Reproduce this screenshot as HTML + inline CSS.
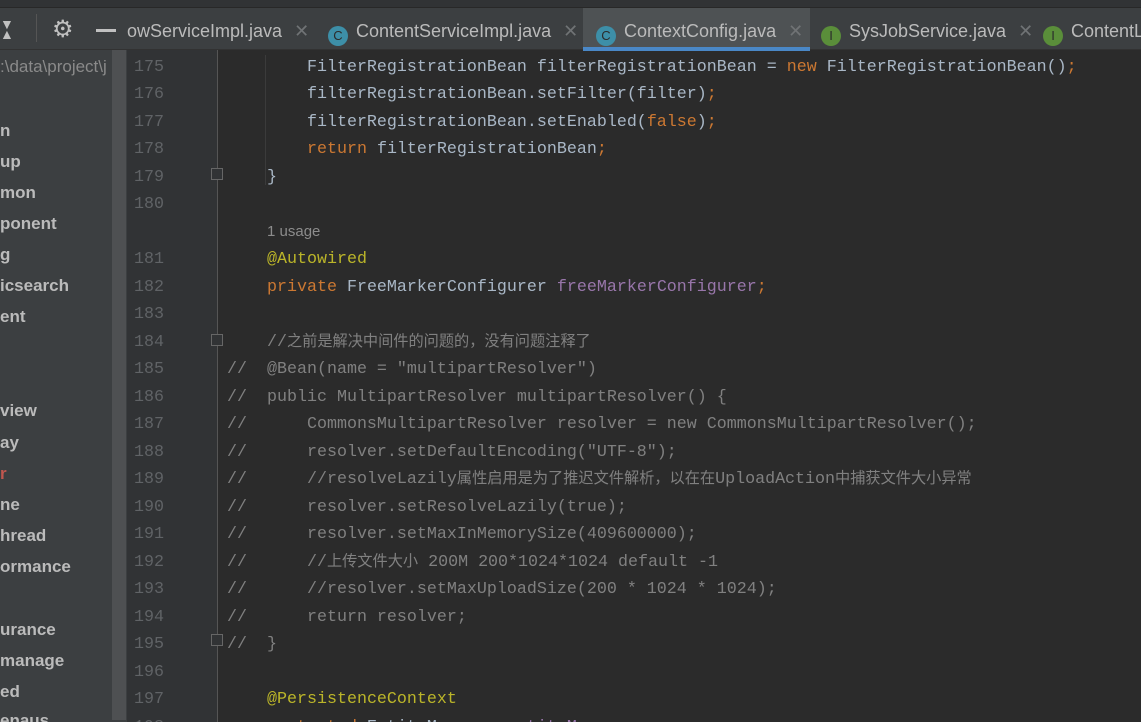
<!DOCTYPE html>
<html><head><meta charset="utf-8"><style>
*{margin:0;padding:0;box-sizing:border-box}
html{width:1141px;height:722px;overflow:hidden}
body{width:1141px;height:722px;overflow:hidden;background:#2b2b2b;position:relative;font-family:"Liberation Sans","Noto Sans CJK SC",sans-serif}
.top{position:absolute;left:0;top:0;width:1141px;height:8px;background:#313335;border-bottom:1px solid #282828}
.tabs{position:absolute;left:0;top:8px;width:1141px;height:42px;background:#3c3f41;border-bottom:1px solid #323232}
.tab{position:absolute;top:2px;height:42px;line-height:42px;font-size:18px;color:#bbbbbb;white-space:nowrap}
.ic{display:inline-block;width:20px;height:20px;border-radius:50%;color:#2b2b2b;font-size:13px;line-height:20px;text-align:center;vertical-align:-3px;margin-right:8px;font-family:"Liberation Sans",sans-serif}
.c{background:#3d8fa8}.i{background:#5a8e3a}
.x{color:#707375;margin-left:12px;font-size:18px}
.side{position:absolute;left:0;top:50px;width:112px;height:672px;background:#3c3f41;overflow:hidden}
.sb{position:absolute;left:112px;top:50px;width:15px;height:672px;background:#3c3f41}
.sb div{position:absolute;left:0;top:0;width:14px;height:670px;background:#4e5052}
.si{position:absolute;left:0;font-weight:bold;font-size:17px;color:#bbbbbb;white-space:nowrap}
.gut{position:absolute;left:127px;top:50px;width:90px;height:672px;background:#313335}
.gl{position:absolute;left:217px;top:50px;width:1px;height:672px;background:#555}
.ln{position:absolute;left:127px;width:37px;text-align:right;font-family:"Liberation Mono",monospace;font-size:16.67px;line-height:20px;color:#606366;margin-top:2px}
.cd{position:absolute;left:227px;font-family:"Liberation Mono","Noto Sans CJK SC",monospace;font-size:16.67px;line-height:20px;height:20px;color:#a9b7c6;white-space:pre;margin-top:2px}
.k{color:#cc7832}.a{color:#bbb529}.f{color:#9876aa}.cm{color:#808080}.s{color:#6a8759}
.cj{font-family:"Noto Sans CJK SC",sans-serif;font-size:15.2px;line-height:1;vertical-align:baseline}
.fold{position:absolute;left:211px;width:12px;height:12px;border:1px solid #666;background:#313335}
</style></head><body>
<div class="top"></div>
<div class="tabs">
 <div style="position:absolute;left:0;top:11px;width:18px;height:20px;color:#c0c0c0;font-size:14px;line-height:10px">▼<br>▲</div>
 <div style="position:absolute;left:36px;top:6px;width:1px;height:28px;background:#555"></div>
 <div style="position:absolute;left:52px;top:7px;color:#c0c0c0;font-size:24px">⚙</div>
 <div style="position:absolute;left:96px;top:21px;width:20px;height:3px;background:#c0c0c0"></div>
 <div class="tab" style="left:127px">owServiceImpl.java<span class="x">✕</span></div>
 <div class="tab" style="left:328px"><span class="ic c">C</span>ContentServiceImpl.java<span class="x">✕</span></div>
 <div style="position:absolute;left:583px;top:0;width:227px;height:42px;background:#4e5254"></div>
 <div style="position:absolute;left:583px;top:39px;width:227px;height:4px;background:#4a88c7"></div>
 <div class="tab" style="left:596px"><span class="ic c">C</span>ContextConfig.java<span class="x">✕</span></div>
 <div class="tab" style="left:821px"><span class="ic i">I</span>SysJobService.java<span class="x">✕</span></div>
 <div class="tab" style="left:1043px"><span class="ic i">I</span>ContentL</div>
</div>
<div class="side">
 <div style="position:absolute;left:0;top:7px;color:#8a8a8a;font-size:17px;white-space:nowrap">:\data\project\j</div>
 <div class="si" style="top:71px">n</div>
 <div class="si" style="top:102px">up</div>
 <div class="si" style="top:133px">mon</div>
 <div class="si" style="top:164px">ponent</div>
 <div class="si" style="top:195px">g</div>
 <div class="si" style="top:226px">icsearch</div>
 <div class="si" style="top:257px">ent</div>
 <div class="si" style="top:351px">view</div>
 <div class="si" style="top:383px">ay</div>
 <div class="si" style="top:414px;color:#c0574f">r</div>
 <div class="si" style="top:445px">ne</div>
 <div class="si" style="top:476px">hread</div>
 <div class="si" style="top:507px">ormance</div>
 <div class="si" style="top:570px">urance</div>
 <div class="si" style="top:601px">manage</div>
 <div class="si" style="top:632px">ed</div>
 <div class="si" style="top:661px">enaus</div>
</div>
<div class="sb"><div></div></div>
<div class="gut"></div>
<div class="gl"></div>
<div style="position:absolute;left:265px;top:55px;width:1px;height:130px;background:#3b3b3b"></div>
<div class="fold" style="top:168px"></div>
<div class="fold" style="top:334px"></div>
<div class="fold" style="top:634px"></div>

<div class="ln" style="top:56px">175</div><div class="cd" style="top:56px">        FilterRegistrationBean filterRegistrationBean = <span class="k">new</span> FilterRegistrationBean()<span class="k">;</span></div>
<div class="ln" style="top:83px">176</div><div class="cd" style="top:83px">        filterRegistrationBean.setFilter(filter)<span class="k">;</span></div>
<div class="ln" style="top:111px">177</div><div class="cd" style="top:111px">        filterRegistrationBean.setEnabled(<span class="k">false</span>)<span class="k">;</span></div>
<div class="ln" style="top:138px">178</div><div class="cd" style="top:138px">        <span class="k">return</span> filterRegistrationBean<span class="k">;</span></div>
<div class="ln" style="top:166px">179</div><div class="cd" style="top:166px">    }</div>
<div class="ln" style="top:193px">180</div>
<div style="position:absolute;left:267px;top:223px;font-size:15px;color:#8c8c8c">1 usage</div>
<div class="ln" style="top:248px">181</div><div class="cd" style="top:248px">    <span class="a">@Autowired</span></div>
<div class="ln" style="top:276px">182</div><div class="cd" style="top:276px">    <span class="k">private</span> FreeMarkerConfigurer <span class="f">freeMarkerConfigurer</span><span class="k">;</span></div>
<div class="ln" style="top:303px">183</div>
<div class="ln" style="top:331px">184</div><div class="cd cm" style="top:331px">    //<span class="cj">之前是解决中间件的问题的，没有问题注释了</span></div>
<div class="ln" style="top:358px">185</div><div class="cd cm" style="top:358px">//  @Bean(name = "multipartResolver")</div>
<div class="ln" style="top:386px">186</div><div class="cd cm" style="top:386px">//  public MultipartResolver multipartResolver() {</div>
<div class="ln" style="top:413px">187</div><div class="cd cm" style="top:413px">//      CommonsMultipartResolver resolver = new CommonsMultipartResolver();</div>
<div class="ln" style="top:441px">188</div><div class="cd cm" style="top:441px">//      resolver.setDefaultEncoding("UTF-8");</div>
<div class="ln" style="top:468px">189</div><div class="cd cm" style="top:468px">//      //resolveLazily<span class="cj">属性启用是为了推迟文件解析，以在在</span>UploadAction<span class="cj">中捕获文件大小异常</span></div>
<div class="ln" style="top:496px">190</div><div class="cd cm" style="top:496px">//      resolver.setResolveLazily(true);</div>
<div class="ln" style="top:523px">191</div><div class="cd cm" style="top:523px">//      resolver.setMaxInMemorySize(409600000);</div>
<div class="ln" style="top:551px">192</div><div class="cd cm" style="top:551px">//      //<span class="cj">上传文件大小</span> 200M 200*1024*1024 default -1</div>
<div class="ln" style="top:578px">193</div><div class="cd cm" style="top:578px">//      //resolver.setMaxUploadSize(200 * 1024 * 1024);</div>
<div class="ln" style="top:606px">194</div><div class="cd cm" style="top:606px">//      return resolver;</div>
<div class="ln" style="top:633px">195</div><div class="cd cm" style="top:633px">//  }</div>
<div class="ln" style="top:661px">196</div>
<div class="ln" style="top:688px">197</div><div class="cd" style="top:688px">    <span class="a">@PersistenceContext</span></div>
<div class="ln" style="top:716px">198</div><div class="cd" style="top:716px">    <span class="k">protected</span> EntityManager <span class="f">entityManager</span><span class="k">;</span></div>
</body></html>
